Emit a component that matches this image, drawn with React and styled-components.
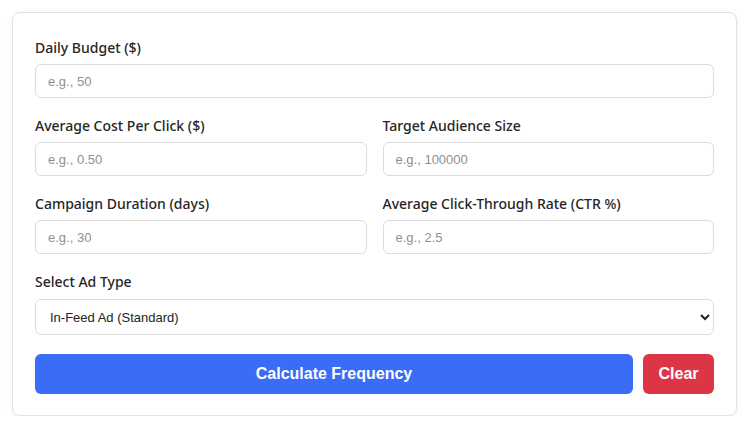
import styled, { createGlobalStyle } from "styled-components";

const GlobalStyle = createGlobalStyle`
  body {
    margin: 0;
    background: #ffffff;
    font-family: "Segoe UI", "Noto Sans", "Open Sans", sans-serif;
  }
`;

const Page = styled.div`
  padding: 12px 13px 0 12px;
`;

const Card = styled.div`
  background: #fff;
  border: 1px solid #e2e2e2;
  border-radius: 8px;
  box-shadow: 0 2px 6px rgba(0, 0, 0, 0.06);
  padding: 25px 22px 21px;
`;

const Row = styled.div`
  display: grid;
  grid-template-columns: 1fr 1fr;
  gap: 16px;
`;

const Group = styled.div`
  display: flex;
  flex-direction: column;
  margin-bottom: 18px;
`;

const Label = styled.label`
  font-size: 14px;
  font-weight: 500;
  color: #262626;
  line-height: 20px;
  margin-bottom: 6px;
`;

const Input = styled.input`
  box-sizing: border-box;
  height: 34px;
  padding: 0 12px;
  border: 1px solid #dcdcdc;
  border-radius: 6px;
  font-family: "Liberation Sans", Arial, sans-serif;
  font-size: 13px;
  color: #333;
  outline: none;
  &::placeholder {
    color: #8f8f8f;
  }
`;

const Select = styled.select`
  box-sizing: border-box;
  height: 36px;
  margin-top: 1px;
  padding: 0 10px;
  border: 1px solid #dcdcdc;
  border-radius: 6px;
  background: #fff;
  font-family: "Liberation Sans", Arial, sans-serif;
  font-size: 13px;
  color: #222;
  outline: none;
`;

const Actions = styled.div`
  display: flex;
  gap: 10px;
  margin-top: 19px;
`;

const Button = styled.button`
  height: 40px;
  border: none;
  border-radius: 6px;
  color: #fff;
  font-family: "Liberation Sans", Arial, sans-serif;
  font-size: 16px;
  font-weight: 700;
  cursor: pointer;
  background: ${(p) => (p.$danger ? "#dc3545" : "#3a6cf6")};
  flex: ${(p) => (p.$danger ? "0 0 71px" : "1")};
`;

const Field = ({ label, placeholder }) => (
  <Group>
    <Label>{label}</Label>
    <Input type="number" placeholder={placeholder} />
  </Group>
);

const App = () => {
  return (
    <Page>
      <GlobalStyle />
      <Card>
        <Field label="Daily Budget ($)" placeholder="e.g., 50" />
        <Row>
          <Field label="Average Cost Per Click ($)" placeholder="e.g., 0.50" />
          <Field label="Target Audience Size" placeholder="e.g., 100000" />
        </Row>
        <Row>
          <Field label="Campaign Duration (days)" placeholder="e.g., 30" />
          <Field label="Average Click-Through Rate (CTR %)" placeholder="e.g., 2.5" />
        </Row>
        <Group>
          <Label>Select Ad Type</Label>
          <Select defaultValue="infeed">
            <option value="infeed">In-Feed Ad (Standard)</option>
            <option value="topview">TopView Ad</option>
            <option value="spark">Spark Ad</option>
          </Select>
        </Group>
        <Actions>
          <Button>Calculate Frequency</Button>
          <Button $danger>Clear</Button>
        </Actions>
      </Card>
    </Page>
  );
};

export default App;
